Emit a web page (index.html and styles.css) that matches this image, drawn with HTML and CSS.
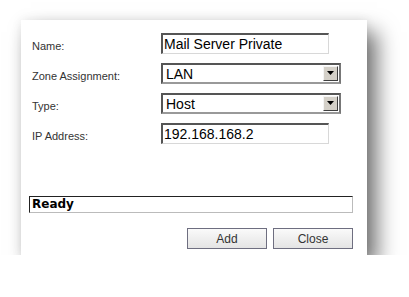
FILE: index.html
```html
<!DOCTYPE html>
<html lang="en">
<head>
  <meta charset="UTF-8">
  <title>Add Address Object</title>
  <link rel="stylesheet" href="styles.css">
</head>
<body>
  <div class="dialog">

    <!-- form fields -->
    <div class="form-grid">
      <label class="field-label">Name:</label>
      <div class="text-box">Mail Server Private</div>

      <label class="field-label">Zone Assignment:</label>
      <div class="select-box">
        <span>LAN</span>
        <span class="arrow"><svg width="9" height="5" viewBox="0 0 9 5"><path d="M1 0h7L4.5 4z" fill="#000"/></svg></span>
      </div>

      <label class="field-label">Type:</label>
      <div class="select-box">
        <span>Host</span>
        <span class="arrow"><svg width="9" height="5" viewBox="0 0 9 5"><path d="M1 0h7L4.5 4z" fill="#000"/></svg></span>
      </div>

      <label class="field-label">IP Address:</label>
      <div class="text-box">192.168.168.2</div>
    </div>

    <div class="status-box">Ready</div>

    <div class="button-row">
      <button class="btn">Add</button>
      <button class="btn">Close</button>
    </div>

  </div>
</body>
</html>
```

FILE: styles.css
```css
* {
  box-sizing: border-box;
}

html, body {
  margin: 0;
  padding: 0;
  background: #fff;
}

body {
  padding: 20px 0 0 21px;
  font-family: "Liberation Sans", Arial, sans-serif;
}

.dialog {
  width: 346px;
  height: 235px;
  background: #fff;
  padding: 13px 0 0 0;
  box-shadow: 10px 12px 20px rgba(0, 0, 0, 0.55), 0 0 10px rgba(0, 0, 0, 0.08);
}

.form-grid {
  display: grid;
  grid-template-columns: 129px 180px;
  grid-template-rows: 21px 21px 21px 21px;
  row-gap: 9px;
  padding-left: 11px;
}

.field-label {
  font-size: 11px;
  color: #333;
  display: flex;
  align-items: center;
  padding-top: 5px;
}

.text-box {
  width: 168px;
  height: 21px;
  border-style: solid;
  border-width: 2px 1px 1px 2px;
  border-color: #555 #d8d8d8 #d8d8d8 #555;
  font-size: 14px;
  color: #000;
  padding: 1px 0 0 1px;
  line-height: 16px;
}

.select-box {
  width: 180px;
  height: 21px;
  display: flex;
  align-items: center;
  justify-content: space-between;
  border-style: solid;
  border-width: 2px;
  border-color: #555 #777 #999 #555;
  font-size: 14px;
  color: #000;
  padding-left: 3px;
  background: #fff;
}

.arrow {
  width: 15px;
  height: 15px;
  margin-right: 1px;
  background: #d4d0c8;
  border-style: solid;
  border-width: 1px;
  border-color: #f4f4f4 #404040 #404040 #f4f4f4;
  display: flex;
  align-items: center;
  justify-content: center;
}

.status-box {
  margin: 52px 0 0 8px;
  width: 324px;
  height: 17px;
  border-style: solid;
  border-width: 1px;
  border-color: #222 #bbb #bbb #222;
  font-family: "DejaVu Sans", Verdana, sans-serif;
  font-weight: bold;
  font-size: 12px;
  line-height: 15px;
  padding-left: 2px;
  color: #000;
}

.button-row {
  display: flex;
  justify-content: flex-end;
  gap: 6px;
  width: 332px;
  margin-top: 15px;
}

.btn {
  width: 80px;
  height: 21px;
  border: 1px solid #6e6e80;
  background: linear-gradient(#fafafa, #e4e4e4);
  font-family: "Liberation Sans", Arial, sans-serif;
  font-size: 12px;
  color: #333;
  padding: 0;
}
```
